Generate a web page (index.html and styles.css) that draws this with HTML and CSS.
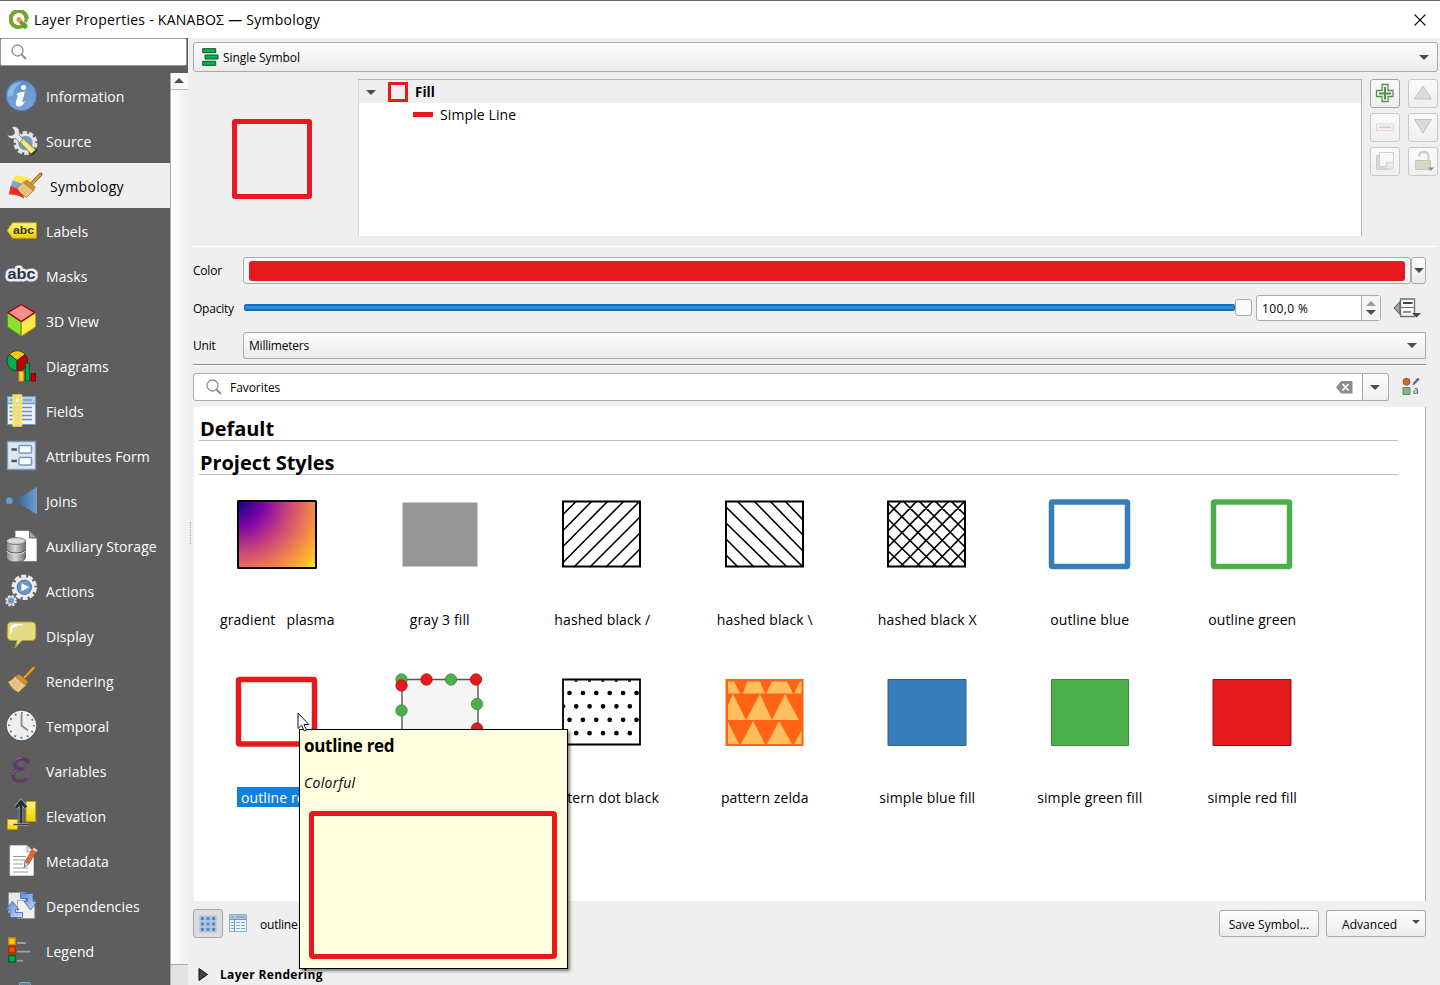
FILE: index.html
```html
<!DOCTYPE html>
<html lang="en">
<head>
<meta charset="utf-8">
<title>Layer Properties - ΚΑΝΑΒΟΣ — Symbology</title>
<link rel="stylesheet" href="styles.css">
</head>
<body>
<svg class="defs" width="0" height="0">
  <defs>
    <linearGradient id="gBlue" x1="0" y1="0" x2="0" y2="1"><stop offset="0" stop-color="#5f93cf"/><stop offset="1" stop-color="#79a5d8"/></linearGradient>
    <linearGradient id="gYel" x1="0" y1="0" x2="0" y2="1"><stop offset="0" stop-color="#fff27a"/><stop offset="1" stop-color="#f0d000"/></linearGradient>
    <linearGradient id="gJoin"><stop offset="0" stop-color="#2f5f96"/><stop offset="1" stop-color="#729fcf"/></linearGradient>
    <linearGradient id="gCyl"><stop offset="0" stop-color="#8a8a8a"/><stop offset=".45" stop-color="#d8d8d8"/><stop offset="1" stop-color="#6e6e6e"/></linearGradient>
    <linearGradient id="gArr" x1="0" y1="0" x2="1" y2="1"><stop offset="0" stop-color="#5a8ede"/><stop offset="1" stop-color="#c8dcf8"/></linearGradient>
    <radialGradient id="gPlasma" gradientUnits="userSpaceOnUse" cx="3" cy="3" r="102">
      <stop offset="0" stop-color="#0d0887"/><stop offset=".25" stop-color="#7e03a8"/><stop offset=".5" stop-color="#cb4679"/><stop offset=".74" stop-color="#f38748"/><stop offset=".9" stop-color="#fdb92c"/><stop offset="1" stop-color="#f4f020"/>
    </radialGradient>
    <g id="brush">
      <path d="M34 9.500 24 20" stroke="#8a5510" stroke-width="3.800" stroke-linecap="round"/>
      <path d="M33.700 9.800 24 20" stroke="#e0a040" stroke-width="2.300" stroke-linecap="round"/>
      <path d="M15.500 18 26.500 27 18.500 34.500 Q11 31 8 23.700Q12 22.500 15.500 18Z" fill="#edc98c" stroke="#a06a20" stroke-width=".8"/>
      <path d="M11.500 24 19 32M14 22.500 21.500 30M16 20.500 24 28M12 28.500 17 21M15.500 31 20.500 23.500" stroke="#c89a5c" stroke-width=".5"/>
      <path d="M19 16 28 23.500 26 27.300 15.500 18.500Z" fill="#d1923a" stroke="#9a641c" stroke-width=".7"/>
    </g>
    <g id="lens" fill="none" stroke="#8f8f8f"><circle cx="6.500" cy="6.500" r="5.500" stroke-width="1.300"/><path d="m10.500 10.500 4.500 4.500" stroke-width="2"/></g>
  </defs>
</svg>
<div class="window">
  <header class="titlebar">
    <svg class="logo" width="20" height="20" viewBox="0 0 20 20" fill="none"><path d="M15.500 14.500A8 8 0 1 1 17.700 9" stroke="#75a52e" stroke-width="4.200"/><path d="M10.500 10.500 17 17" stroke="#75a52e" stroke-width="5"/><path d="m11 9.500 6.200 7" stroke="#a6cc5a" stroke-width="1.500"/><path d="M16.300 12A7.700 7.700 0 0 0 17.300 8" stroke="#75a52e" stroke-width="3.500"/><circle cx="9.700" cy="9.500" r="5.700" fill="#fff"/><path d="m11 11 6.500 7" stroke="#6b9a2a" stroke-width="3.500"/><circle cx="10" cy="9.500" r="2.500" fill="#f1903e"/></svg>
    <h1 class="title">Layer Properties - ΚΑΝΑΒΟΣ — Symbology</h1>
    <svg class="close" width="12" height="12" viewBox="0 0 12 12"><path d="m.5.5 11 11m0-11-11 11" stroke="#111" stroke-width="1.100"/></svg>
  </header>
  <div class="body">
    <aside class="sidebar">
      <div class="side-search"><svg width="16" height="16" viewBox="0 0 16 16"><use href="#lens"/></svg></div>
      <div class="side-wrap">
        <nav class="side-list">
          <a class="item"><svg class="ico" viewBox="0 0 44 45"><circle cx="21.300" cy="22.500" r="15.200" fill="url(#gBlue)" stroke="#4679b6" stroke-width=".8"/><path d="M8 24Q7 10 22 9Q14 13 13 22Z" fill="#a4c3e8" opacity=".7"/><circle cx="23.500" cy="14.500" r="2.500" fill="#fff"/><path d="M17 20.500q3-2 8-1.800l-3 10.500q1.500.3 3-1.200-1.700 5.500-6.500 5.500-3.500-.6-2.500-4.500l2-7q-1-.5-1.700.6z" fill="#fff"/></svg><span>Information</span></a>
          <a class="item"><svg class="ico" viewBox="0 0 44 45"><circle cx="25.500" cy="25" r="10.500" fill="none" stroke="#dedede" stroke-width="3" stroke-dasharray="4.500 2.100"/><circle cx="25.500" cy="25" r="8.500" fill="#6f9ccc" stroke="#e4e4e4" stroke-width="2.500"/><path d="M7 16.500Q12 19 14.500 15.500L14 12Q11 9.500 12.500 8.500Q19 8 19.500 14L19 17 24 22 20 25 16 20.500Q9 22 7 16.500Z" fill="#e8e8e8" stroke="#555" stroke-width=".6"/><path d="M23.500 20.500 36.500 32.500 32 37 20 24.500Z" fill="#f1dc6c" stroke="#7d6a1c" stroke-width=".8"/><path d="m23 24 9.500 9.500" stroke="#fff5ae" stroke-width="1.500"/><path d="m31 37 6-5" stroke="#3c3415" stroke-width="1.800"/></svg><span>Source</span></a>
          <a class="item active"><svg class="ico" viewBox="0 0 44 45"><path d="M15 12 31 15.500 28 26 12 20Z" fill="#ffe64a"/><path d="m12.500 17.500 14 4.500-3 7-13-5z" fill="#7fa6d6"/><path d="M10.500 23 23 28 24 35.500Q17 31 9 31.500Z" fill="#ee2c24"/><use href="#brush" transform="translate(9.500 2.500) scale(.92)"/></svg><span>Symbology</span></a>
          <a class="item"><svg class="ico" viewBox="0 0 44 45"><path d="M7 22.500 12.500 14.700H36.500V30.300H12.500Z" fill="url(#gYel)" stroke="#b89612" stroke-width="1"/><text class="abc" x="13" y="25.700" font-size="11.500" textLength="21" lengthAdjust="spacingAndGlyphs">abc</text></svg><span>Labels</span></a>
          <a class="item"><svg class="ico" viewBox="0 0 44 45"><text class="abc halo" x="7.500" y="26" font-size="15" textLength="28" lengthAdjust="spacingAndGlyphs">abc</text></svg><span>Masks</span></a>
          <a class="item"><svg class="ico" viewBox="0 0 44 45"><path d="M7.500 15 21 24V38L7.500 29Z" fill="#87e12e" stroke="#4b9a0c"/><path d="M35.500 15 21.500 24V38L35.500 29Z" fill="#ffe94e" stroke="#b89b00"/><path d="M21.300 6.500 34.700 14.500 21.300 23.500 8 14.500Z" fill="#f58e8e" stroke="#a40000" stroke-width="1.300"/></svg><span>3D View</span></a>
          <a class="item"><svg class="ico" viewBox="0 0 44 45"><g stroke="#222" stroke-width=".7"><path d="M17 17.500 9.500 11.500A10 10 0 0 1 25 11.500Z" fill="#fcc800"/><path d="M17 17.500 9.500 11.500A9.600 9.600 0 0 0 17 27.500Z" fill="#00b050"/><path d="M17 17.500 25 11.500A9.600 9.600 0 0 1 17 27.500Z" fill="#c00000"/></g><path d="M19 28.500h4.500v9.500H19z" fill="#ffd42a" stroke="#e09000"/><path d="M25.500 20.500h4v17.500h-4z" fill="#00a550" stroke="#05602c"/><path d="M31 30.500h4.500V38H31z" fill="#c00000" stroke="#700"/></svg><span>Diagrams</span></a>
          <a class="item"><svg class="ico" viewBox="0 0 44 45"><path d="M7.500 8.500h28v28h-28z" fill="#f0f0f0" stroke="#6f9ac4"/><path d="M8 9h27v6.500H8z" fill="#b4d0ee"/><path d="M8 15.500h27M10 12h5M23 12h9" stroke="#6f9ac4" stroke-width="1.300"/><path d="M9.500 19.500H32M9.500 23.500H32M9.500 27.500H32M9.500 31.500H32" stroke="#6690bf" stroke-width="1.300"/><path d="M13 7h8.500v31H13z" fill="#eee287" stroke="#f9f051" stroke-width="1.300" opacity=".95"/><path d="M16 11h2.500v2.500H16z" fill="#fff"/></svg><span>Fields</span></a>
          <a class="item"><svg class="ico" viewBox="0 0 44 45"><path d="M7.500 8.500h28v28h-28z" fill="#e4e5e6" stroke="#6f9ccd" stroke-width="1.300"/><path d="M11.500 16.500H17M11.500 28H17" stroke="#41597b" stroke-width="2.500"/><rect x="19" y="12.500" width="12.500" height="7.500" rx="1" fill="#fff" stroke="#7199c4" stroke-width="1.500"/><rect x="19" y="24.500" width="12.500" height="7.500" rx="1" fill="#fff" stroke="#7199c4" stroke-width="1.500"/></svg><span>Attributes Form</span></a>
          <a class="item"><svg class="ico" viewBox="0 0 44 45"><circle cx="9.300" cy="22.700" r="3.500" fill="#6c9bd0" stroke="#4677ac" stroke-width=".6"/><path d="M15 22.700 37 8.700V36.500Z" fill="url(#gJoin)"/></svg><span>Joins</span></a>
          <a class="item"><svg class="ico" viewBox="0 0 44 45"><path d="M15.500 8H29.500L36.500 15V38H15.500Z" fill="#fff" stroke="#ddd" stroke-width=".5"/><path d="M29.500 8V15H36.500Z" fill="#aaa" stroke="#555" stroke-width=".8"/><path d="M6.500 18V35Q8 39 16 39T25.500 35V18Z" fill="url(#gCyl)" stroke="#555" stroke-width=".7"/><ellipse cx="16" cy="18" rx="9.500" ry="3.400" fill="#d9d9d9" stroke="#606060" stroke-width=".8"/><path d="M6.500 26.500Q9 30 16 30T25.500 26.500" fill="none" stroke="#505050"/><path d="M6.500 27.700Q9 31.200 16 31.200T25.500 27.700" fill="none" stroke="#ececec" stroke-width=".8"/></svg><span>Auxiliary Storage</span></a>
          <a class="item"><svg class="ico" viewBox="0 0 44 45"><circle cx="24.300" cy="19.300" r="11" fill="none" stroke="#e9e9e9" stroke-width="3.500" stroke-dasharray="5 1.910"/><circle cx="24.300" cy="19.300" r="8.700" fill="#6b98cc" stroke="#ececec" stroke-width="3"/><circle cx="24.300" cy="19.300" r="7.200" fill="#6b98cc" stroke="#355e94" stroke-width=".7"/><path d="M21.500 15.300 29 19.300 21.500 23.300Z" fill="#fff"/><circle cx="11" cy="32.700" r="4.900" fill="none" stroke="#e0e0e0" stroke-width="1.800" stroke-dasharray="2.500 1.350"/><circle cx="11" cy="32.700" r="3.700" fill="#6b98cc" stroke="#ddd" stroke-width="1.300"/></svg><span>Actions</span></a>
          <a class="item"><svg class="ico" viewBox="0 0 44 45"><path d="M11.500 9H31.500Q35.800 9 35.800 13.500V23Q35.800 27.500 31.500 27.500H22L15 34.700 17 27.500H12Q7.300 27.500 7.300 23V13.500Q7.300 9 11.500 9Z" fill="#e5db83" stroke="#b39b28"/><path d="M10.500 21V16Q10.500 11.500 16 11.500H23Q14 12.500 12.500 15Z" fill="#fff" stroke="#fff" stroke-width=".8"/></svg><span>Display</span></a>
          <a class="item"><svg class="ico" viewBox="0 0 44 45"><use href="#brush"/></svg><span>Rendering</span></a>
          <a class="item"><svg class="ico" viewBox="0 0 44 45"><circle cx="21.500" cy="22.500" r="15.200" fill="#4e4e4e"/><circle cx="21.500" cy="22.500" r="14.400" fill="#eeeeec" stroke="#fff" stroke-width=".7"/><circle cx="21.500" cy="22.500" r="12.300" fill="none" stroke="#4d79ae" stroke-width="2" stroke-dasharray="1.800 4.640" stroke-dashoffset=".9"/><path d="M21.500 11.500V22.500L28 27.500" fill="none" stroke="#888" stroke-width="1.800"/></svg><span>Temporal</span></a>
          <a class="item"><svg class="ico" viewBox="0 0 44 45"><path d="M28 13.500Q25 10 20 11.200Q14.500 12.500 14.800 16.500Q15.500 21 24.500 21Q13.500 21 13 27Q13 33.300 20.500 33Q26 33 29 29" fill="none" stroke="#5f3768" stroke-width="3.200"/><circle cx="27.500" cy="13.500" r="2.200" fill="#5f3768"/><circle cx="28" cy="29" r="2" fill="#76507e"/><path d="M15 12.500Q18 10 22 10M12.500 27Q13 23.500 17 22" stroke="#9a7ba5" fill="none" stroke-width=".8"/></svg><span>Variables</span></a>
          <a class="item"><svg class="ico" viewBox="0 0 44 45"><path d="M26 8.500h9.700v20H26z" fill="url(#gYel)" stroke="#b99f00"/><path d="M7.500 26.500h10v10h-10z" fill="url(#gYel)" stroke="#b99f00"/><path d="M13.500 31.500H29" stroke="#aaa" stroke-width="2.200"/><path d="M13.500 31.500H29" stroke="#333" stroke-width=".9"/><path d="M21 30V11M16 14.500 21 8.500 26 14.500" fill="none" stroke="#a9b0b0" stroke-width="4.300"/><path d="M21 30V11M16 14.500 21 8.500 26 14.500" fill="none" stroke="#263033" stroke-width="2.800"/></svg><span>Elevation</span></a>
          <a class="item"><svg class="ico" viewBox="0 0 44 45"><path d="M10 7.500H27L33.500 14V37.500H10Z" fill="#fff" stroke="#ddd" stroke-width=".6"/><path d="M27 7.500V14H33.500" fill="#ddd" stroke="#888" stroke-width=".7"/><path d="M13 18.500H26M13 22H25M13 26H23M13 30H28M13 34H28" stroke="#9a9a9a" stroke-width="1.200"/><path d="M33 10.500 37 13 28.500 26 24.500 29 25 23.500Z" fill="#de6a32" stroke="#9d4216" stroke-width=".7"/><path d="m33 10.500 4 2.500" stroke="#f0d0c0" stroke-width="2.200"/><path d="M25 23.500 28.500 26 24.300 29.500Z" fill="#ddd" stroke="#555" stroke-width=".6"/></svg><span>Metadata</span></a>
          <a class="item"><svg class="ico" viewBox="0 0 44 45"><path d="M8.500 9.500H25.500V30H8.500Z" fill="#e7e7e5" stroke="#888" stroke-width=".6"/><path d="M17.500 17.500H34.700V35.500H17.500Z" fill="#f1f1ef" stroke="#888" stroke-width=".6"/><path d="M20.500 10.500H33V18.500H37L30.500 27 24 18.500H27.500V15.500H20.500Z" fill="url(#gArr)" stroke="#3766b5" stroke-width=".8"/><path d="M22.500 34.500H10V26.500H6L12.500 18.500 19 26.500H15.500V29.500H22.500Z" fill="url(#gArr)" stroke="#3766b5" stroke-width=".8"/></svg><span>Dependencies</span></a>
          <a class="item"><svg class="ico" viewBox="0 0 44 45"><path d="M8.700 10h6.500v6.500H8.700z" fill="#ffd500" stroke="#d78300" stroke-width="1.400"/><path d="M8.700 18.500h6.500V25H8.700z" fill="#ff4b00" stroke="#b52a00" stroke-width="1.400"/><path d="M8.700 27.500h6.500V34H8.700z" fill="#00b050" stroke="#00602c" stroke-width="1.400"/><path d="M17 15h9M17 23.700h13.500M17 32.700h6" stroke="#a0a0a0" stroke-width="1.800"/></svg><span>Legend</span></a>
          <a class="item"><svg class="ico" viewBox="0 0 44 45"><rect x="19.500" y="9.500" width="11" height="20" rx="1" fill="#5f7f9f" stroke="#8aa9c8"/></svg><span></span></a>
        </nav>
        <div class="scrollbar">
          <div class="sb-up"><i class="tri up"></i></div>
          <div class="sb-thumb"></div>
          <div class="sb-groove"></div>
        </div>
      </div>
    </aside>
    <main class="main">
      <div class="combo renderer">
        <svg width="17" height="18" viewBox="0 0 17 18" fill="#05b050" stroke="#07572b"><path d="M.7.700h13v4h-13zM3 7h13v4H3zM.7 13.300h13v4h-13z"/></svg>
        <span class="sm">Single Symbol</span><i class="tri down"></i>
      </div>
      <section class="symbol">
        <div class="preview"><div class="preview-box"></div></div>
        <div class="tree">
          <div class="tree-row head"><i class="tri down"></i><i class="fill-ico"></i><span>Fill</span></div>
          <div class="tree-row child"><i class="line-ico"></i><span>Simple Line</span></div>
        </div>
        <div class="tools">
          <button class="tool on"><svg viewBox="0 0 30 29"><path d="M12 5.500h6v6h5v6h-5v5h-6v-5H6.500v-6H12z" fill="#f2f8f0" stroke="#569050" stroke-width="1.300"/><path d="M15 8v12.500M9 14.500h12" stroke="#569050" stroke-width="2.200"/></svg></button>
          <button class="tool"><svg viewBox="0 0 30 29"><path d="M15 7 23.500 20H6.500Z" fill="#d9dcdf" stroke="#bcc1c6"/></svg></button>
          <button class="tool"><svg viewBox="0 0 30 29"><path d="M6.500 11h17v6.500h-17z" fill="#f7f2f2" stroke="#e3d5d5"/><path d="M9 14.300h12" stroke="#ddcfcf" stroke-width="1.800"/></svg></button>
          <button class="tool"><svg viewBox="0 0 30 29"><path d="M15 20 23.500 6.500H6.500Z" fill="#d9dcdf" stroke="#bcc1c6"/></svg></button>
          <button class="tool"><svg viewBox="0 0 30 29"><path d="M6.500 8.500h12v14h-12z" fill="#d9dadb" stroke="#c8cacc"/><path d="M9.500 5.500h14v14h-14z" fill="#f7f7f7" stroke="#cbcdcf"/><path d="M16.500 15.500h7v4q0 3-3.500 3t-3.500-3z" fill="#eeebdf" stroke="#d4d0c3"/></svg></button>
          <button class="tool"><svg viewBox="0 0 30 29"><path d="M11 9.500q0-4.500 4.700-4.500T20.500 9.500V14" fill="none" stroke="#cfcfcf" stroke-width="2.300"/><path d="M7.500 13.500h15v9h-15z" fill="#d9d6c8" stroke="#c9c5b2"/><path d="M20 20.500h6l-3 3.500z" fill="#8f8f8f"/></svg></button>
        </div>
      </section>
      <hr class="rule light">
      <div class="row color-row"><label class="sm lab">Color</label><div class="color-btn"><div class="color-fill"></div></div><div class="color-drop"><i class="tri down"></i></div></div>
      <div class="row opacity-row"><label class="sm lab">Opacity</label>
        <div class="slider"><div class="track"></div><div class="knob"></div></div>
        <div class="spin"><span class="sm">100,0 %</span><div class="spin-btns"><i class="tri up dim"></i><i class="tri down"></i></div></div>
        <svg class="dd" width="28" height="22" viewBox="0 0 28 22"><path d="M1 11 7 4.500V17.500Z" fill="#a0a0a4" stroke="#555"/><path d="M7.500 2h14v17.500h-14z" fill="#f7f9f4" stroke="#6b7267" stroke-width="1.300"/><path d="M7.500 10.500h14" stroke="#6b7267"/><path d="M10 6h9.500" stroke="#444" stroke-width="2"/><path d="M10 15h8" stroke="#555" stroke-width="1.300"/><path d="M19 16h9l-4.500 4.500z" fill="#444"/></svg>
      </div>
      <div class="row unit-row"><label class="sm lab">Unit</label><div class="combo unit"><span class="sm">Millimeters</span><i class="tri down"></i></div></div>
      <hr class="rule dark">
      <div class="row filter-row">
        <div class="filter"><svg width="16" height="16" viewBox="0 0 16 16"><use href="#lens"/></svg><span class="sm">Favorites</span><svg class="clear" width="17" height="13" viewBox="0 0 17 13"><path d="M5 0H16.500V12.500H5L0 6.200Z" fill="#8d8d8d"/><path d="m6.500 3 6 6.500m0-6.500-6 6.500" stroke="#fff" stroke-width="1.600"/></svg></div>
        <div class="filter-drop"><i class="tri down"></i></div>
        <svg class="style-ico" width="22" height="22" viewBox="0 0 22 22"><circle cx="4.500" cy="5.700" r="3.600" fill="#d0662d" stroke="#a64a1c" stroke-width=".7"/><path d="M10.500 9 11.500 6.500 15.500 2 17.500 2.500 17 4 12.500 8.500Z" fill="#456b94"/><path d="M1 11.500h7v7H1z" fill="#8ab38a" stroke="#5d8f60"/><text x="11" y="18" font-size="10" class="tiny">a</text></svg>
      </div>
      <section class="styles">
        <h2 class="group">Default</h2>
        <h2 class="group">Project Styles</h2>
        <div class="grid">
          <figure class="cell"><svg viewBox="0 0 84 72"><rect x="3" y="3" width="78" height="67" rx=".5" fill="url(#gPlasma)" stroke="#000" stroke-width="2"/></svg><figcaption class="wide">gradient&nbsp;&nbsp; plasma</figcaption></figure>
          <figure class="cell"><svg viewBox="0 0 84 72"><path d="M4.500 4.500h75v64h-75z" fill="#969696"/></svg><figcaption>gray 3 fill</figcaption></figure>
          <figure class="cell"><svg viewBox="0 0 84 72"><path d="M2.500 17 16.500 3M2.500 33 32 3M2.500 49 48 3M2.500 65 64 3M14 69 80 3M30 69 80 19M46 69 80 35M62 69 80 51" stroke="#000" stroke-width="1.600"/><path d="M3 3.500h77v65H3z" fill="none" stroke="#000" stroke-width="2"/></svg><figcaption>hashed black /</figcaption></figure>
          <figure class="cell"><svg viewBox="0 0 84 72"><path d="M80 22 62 3M80 37 47 3M80 53 31 3M80 69 14 3M64 69 3 9M48 69 3 25M31 69 3 41M15 69 3 57" stroke="#000" stroke-width="1.600"/><path d="M3 3.500h77v65H3z" fill="none" stroke="#000" stroke-width="2"/></svg><figcaption>hashed black \</figcaption></figure>
          <figure class="cell"><svg viewBox="0 0 84 72"><path d="M3 17 16.500 3M3 33 32 3M3 49 48 3M3 65 64 3M15 69 80 3M31 69 80 19M47 69 80 35M63 69 80 51M80 17 66 3M80 33 50 3M80 49 34 3M80 65 18 3M68 69 3 5M52 69 3 21M36 69 3 37M20 69 3 53" stroke="#000" stroke-width="1.700"/><path d="M3 3.500h77v65H3z" fill="none" stroke="#000" stroke-width="2"/></svg><figcaption>hashed black X</figcaption></figure>
          <figure class="cell"><svg viewBox="0 0 84 72"><rect x="3.500" y="4" width="76" height="64.500" rx="1" fill="none" stroke="#377eb8" stroke-width="5.500"/></svg><figcaption>outline blue</figcaption></figure>
          <figure class="cell"><svg viewBox="0 0 84 72"><rect x="3.500" y="4" width="76" height="64.500" rx="1" fill="none" stroke="#4daf4a" stroke-width="5.500"/></svg><figcaption>outline green</figcaption></figure>
          <figure class="cell"><svg viewBox="0 0 84 72"><rect x="3.500" y="3.500" width="76" height="64.500" rx="1" fill="none" stroke="#e41a1c" stroke-width="5.500"/></svg><figcaption class="sel">outline red</figcaption></figure>
          <figure class="cell"><svg viewBox="0 0 84 72"><path d="M4 3.500h76v64H4z" fill="#f5f5f5" stroke="#555" stroke-width="1.400"/><g stroke-width=".8"><g fill="#4daf4a" stroke="#3b8a39"><circle cx="3.500" cy="3.500" r="5.700"/><circle cx="53" cy="3.500" r="5.700"/><circle cx="3.500" cy="34.500" r="5.700"/><circle cx="79" cy="28" r="5.700"/></g><g fill="#e41a1c" stroke="#a81315"><circle cx="3.500" cy="9.500" r="5.700"/><circle cx="28.500" cy="3.500" r="5.700"/><circle cx="78" cy="3.500" r="5.700"/><circle cx="79" cy="52.500" r="5.700"/></g></g></svg><figcaption></figcaption></figure>
          <figure class="cell"><svg viewBox="0 0 84 72"><path d="M3 3.500h77v65H3z" fill="#fff" stroke="#000" stroke-width="1.800"/><g fill="none" stroke="#000" stroke-width="4.700" stroke-linecap="round" stroke-dasharray="0 13.400"><path d="M9.500 17H80"/><path d="M16.200 30.300H75"/><path d="M9.500 43.800H80"/><path d="M16.200 57.200H75"/></g><path d="M14.500 5h3M28 5h3M41.300 5h3M54.700 5h3M68 5h3M4.500 28.800v3" stroke="#000" stroke-width="1.500"/></svg><figcaption>pattern dot black</figcaption></figure>
          <figure class="cell"><svg viewBox="0 0 84 72"><path d="M3 3.500h77v66H3z" fill="#ff6314"/><path d="M5 5.500h6l6 12H5zM20 17.500 24 5.500H37L42 17.500ZM43 17.500 49 5.500H64L70 17.500ZM71 17.500 77 5.500H79V17.500ZM5 29 10 18 23 44H5ZM23 44 37 18 49 44ZM49 44 62 18 76 44ZM5 46 16 68H5ZM18 68 30 45 42 68ZM44 68 56 45 69 68ZM71 68 79 54V68Z" fill="#ffbe5f"/><path d="M3.500 4h76v65h-76z" fill="none" stroke="#ff6314" stroke-width="2"/></svg><figcaption>pattern zelda</figcaption></figure>
          <figure class="cell"><svg viewBox="0 0 84 72"><path d="M3 3.500h78v66H3z" fill="#377eb8" stroke="#2b628f"/></svg><figcaption>simple blue fill</figcaption></figure>
          <figure class="cell"><svg viewBox="0 0 84 72"><path d="M3.500 3.500h77v66h-77z" fill="#4daf4a" stroke="#3c883a"/></svg><figcaption>simple green fill</figcaption></figure>
          <figure class="cell"><svg viewBox="0 0 84 72"><path d="M3 3.500h78v66H3z" fill="#e41a1c" stroke="#8f1214"/></svg><figcaption>simple red fill</figcaption></figure>
        </div>
      </section>
      <div class="footer">
        <button class="view on"><svg width="18" height="18" viewBox="0 0 18 18"><path d="M.5.500h17v17H.5z" fill="#a9c6e6" stroke="#bcd0e6"/><g fill="#5d88b8"><path d="M2 2h3v3H2zM7.500 2h3v3h-3zM13 2h3v3h-3zM2 7.500h3v3H2zM7.500 7.500h3v3h-3zM13 7.500h3v3h-3zM2 13h3v3H2zM7.500 13h3v3h-3zM13 13h3v3h-3z"/></g></svg></button>
        <svg class="list-ico" width="18" height="18" viewBox="0 0 18 18"><path d="M.5.500h17v17H.5z" fill="#eef3f8" stroke="#8db0d6"/><path d="M1 1h16v4H1z" fill="#a9c6e6"/><path d="M2 3h3M7 3h9M1 5.500h16M5.500 5v12" stroke="#6c98c8"/><path d="M2 8.500h3M7 8.500h4M12 8.500h4M2 11.500h3M7 11.500h4M12 11.500h4M2 14.500h3M7 14.500h4M12 14.500h4" stroke="#7ea5d0"/></svg>
        <span class="sm name">outline red</span>
        <button class="btn">Save Symbol...</button>
        <button class="btn adv">Advanced<i class="tri down small"></i></button>
      </div>
      <div class="rendering"><svg width="11" height="15" viewBox="0 0 11 15"><path d="M1 1.500 9.500 7.500 1 13.500Z" fill="#444" stroke="#111"/></svg><b>Layer Rendering</b></div>
      <div class="grip"></div>
    </main>
  </div>
  <div class="tooltip"><b>outline red</b><i>Colorful</i><div class="tip-box"></div></div>
  <svg class="cursor" width="14" height="20" viewBox="0 0 14 20"><path d="M1 1V16.500L4.500 13.200 7.300 19 9.500 18 7 12.500H11.800Z" fill="#fff" stroke="#112" stroke-width="1"/></svg>
</div>
</body>
</html>
```
FILE: styles.css
```css
* { box-sizing: border-box; }
body { margin: 0; font-family: "Open Sans", "Noto Sans", sans-serif; font-size: 14px; color: #000; overflow: hidden; }
h1, h2, figure, hr { margin: 0; }
button { font: inherit; padding: 0; }
svg { display: block; flex: none; }
.defs { position: absolute; }
.window { position: relative; width: 1440px; height: 985px; background: #efefef; overflow: hidden; display: flex; flex-direction: column; }
.titlebar { flex: none; height: 38px; background: #fff; border-top: 1px solid #666; display: flex; align-items: center; padding: 0 14px 0 9px; }
.title { font-size: 14px; font-weight: 400; margin-left: 5px; flex: 1; white-space: nowrap; letter-spacing: .26px; }
.body { flex: 1; display: flex; min-height: 0; }

.tri { display: block; flex: none; width: 0; height: 0; border: 5px solid transparent; }
.tri.down { border-top-color: #4c4c4c; border-bottom: 0; }
.tri.up { border-bottom-color: #4c4c4c; border-top: 0; }
.tri.dim { border-bottom-color: #999; }
.tri.small { border-width: 4px; border-bottom: 0; }
.sm { font-size: 12px; letter-spacing: -.22px; white-space: nowrap; }

.sidebar { width: 188px; flex: none; background: #5e5e5e; display: flex; flex-direction: column; }
.side-search { height: 28px; width: 187px; background: #fff; border: 1px solid #999; border-radius: 2px; padding: 5px 10px; }
.side-wrap { margin-top: 7px; flex: 1; display: flex; min-height: 0; }
.side-list { width: 170px; overflow: hidden; }
.item { display: flex; align-items: center; height: 45px; color: #fff; white-space: nowrap; letter-spacing: .07px; }
.item span { margin-left: 2px; padding-top: 1px; }
.item.active { background: #efefef; color: #000; letter-spacing: .3px; }
.item.active span { margin-left: 6px; }
.ico { width: 44px; height: 45px; fill: none; }
.abc { font-family: "Liberation Sans", sans-serif; font-weight: 700; fill: #333; letter-spacing: 0; }
.halo { fill: #2e3436; stroke: #e6edfc; stroke-width: 5px; paint-order: stroke; stroke-linejoin: round; }
.tiny { font-family: "Open Sans", sans-serif; fill: #444; }
.scrollbar { width: 18px; display: flex; flex-direction: column; border-left: 1px solid #aaa; }
.sb-up { height: 17px; background: #fafafa; border-bottom: 1px solid #bbb; padding: 5px 0 0 3px; }
.sb-thumb { flex: 1; background: linear-gradient(90deg, #fff, #efefef); }
.sb-groove { height: 21px; background: #e2e2e2; border-top: 1px solid #aaa; }

.main { position: relative; flex: 1; min-width: 0; padding: 4px 0 0 5px; display: flex; flex-direction: column; }
.combo { display: flex; align-items: center; background: linear-gradient(#fdfdfd, #ebebeb); border: 1px solid #aaa; border-radius: 3px; }
.combo .sm { flex: 1; }
.renderer { flex: none; height: 30px; width: 1245px; padding: 0 8px; }
.renderer .sm { margin-left: 4px; letter-spacing: -.05px; }
.symbol { flex: none; display: flex; margin-top: 7px; height: 157px; }
.preview { width: 165px; padding: 40px 0 0 39px; }
.preview-box { width: 80px; height: 80px; border: 5px solid #e8191c; border-radius: 3px; }
.tree { width: 1004px; background: #fff; border-top: 1px solid #b5b5b5; border-right: 1px solid #b5b5b5; border-left: 1px solid #ddd; }
.tree-row { display: flex; align-items: center; height: 23px; }
.tree-row.head { background: #efefef; padding: 1px 0 0 7px; height: 23px; font-weight: 700; font-size: 13.5px; }
.fill-ico { width: 20px; height: 20px; border: 3px solid #e8191c; margin: 0 7px 0 12px; background: #f5eeee; }
.tree-row.child { padding-left: 54px; letter-spacing: .1px; }
.line-ico { width: 20px; height: 5px; background: #e41a1c; margin-right: 7px; }
.tools { display: grid; grid-template-columns: 30px 30px; grid-auto-rows: 29px; gap: 5px 8px; margin-left: 8px; }
.tool { border: 1px solid #c8c8c8; border-radius: 3px; background: linear-gradient(#fbfbfb, #efefef); }
.tool.on { border-color: #a4a4a4; }
.tool svg { width: 30px; height: 29px; margin: -1px; }
.rule { flex: none; border: 0; width: 1244px; height: 1px; }
.rule.light { background: #fff; margin-top: 10px; }
.rule.dark { width: 1233px; height: 2px; background: #8f8f8f; border-bottom: 1px solid #fff; margin-top: 5px; }
.row { flex: none; display: flex; align-items: center; }
.lab { width: 50px; }
.color-row { margin-top: 10px; height: 27px; }
.color-btn { width: 1168px; height: 27px; border: 1px solid #aaa; border-radius: 3px; padding: 3px 5px; background: #f6f6f6; }
.color-fill { height: 20px; background: #e61a1c; border-radius: 3px; }
.color-drop { width: 15px; height: 27px; border: 1px solid #aaa; border-radius: 3px; background: linear-gradient(#fdfdfd, #ebebeb); padding: 10px 0 0 2px; }
.opacity-row { margin-top: 11px; height: 26px; }
.slider { width: 1008px; display: flex; align-items: center; margin: -2px 0 0 1px; }
.track { flex: 1; height: 7px; border: 1px solid #1a6bb3; border-width: 2px 1px; background: #1e90f0; border-radius: 2px; }
.knob { width: 17px; height: 17px; border: 1px solid #aaa; border-radius: 3px; background: #fafafa; }
.spin { width: 125px; height: 26px; margin-left: 4px; border: 1px solid #aaa; border-radius: 3px; background: #fff; display: flex; align-items: stretch; }
.spin .sm { flex: 1; padding: 4px 0 0 5px; letter-spacing: .5px; letter-spacing: .4px; }
.spin-btns { width: 19px; border-left: 1px solid #aaa; background: #f4f4f4; display: flex; flex-direction: column; align-items: center; justify-content: center; gap: 4px; }
.dd { margin-left: 12px; }
.unit-row { margin-top: 11px; height: 27px; }
.unit { width: 1183px; height: 27px; padding: 0 8px 0 5px; border-radius: 3px 0 0 3px; }
.filter-row { margin-top: 7px; height: 28px; }
.filter { width: 1170px; height: 28px; display: flex; align-items: center; background: #fff; border: 1px solid #aaa; border-radius: 3px 0 0 3px; padding: 0 9px 0 12px; }
.filter .sm { margin-left: 8px; flex: 1; letter-spacing: -.05px; }
.filter-drop { width: 26px; height: 28px; border: 1px solid #aaa; border-left: 0; border-radius: 0 3px 3px 0; background: linear-gradient(#fdfdfd, #f0f0f0); padding: 11px 0 0 7px; }
.style-ico { margin-left: 13px; }

.styles { flex: none; margin: 6px 0 0 1px; width: 1232px; height: 494px; background: #fff; border-right: 1px solid #aaa; overflow: hidden; padding-left: 2px; }
.group { width: 1199px; margin-left: 3px; height: 34px; padding: 8px 0 0 1px; font-size: 20px; line-height: 28px; font-weight: 700; letter-spacing: -.05px; border-bottom: 1px solid #c0c0c0; }
.grid { display: grid; grid-template-columns: repeat(7, 162.5px); grid-auto-rows: 178px; }
.cell { display: flex; flex-direction: column; align-items: center; padding-top: 23px; }
.cell svg { width: 84px; height: 72px; overflow: visible; }
.cell figcaption { margin-top: 40px; height: 20px; line-height: 20px; padding: 0 4px; white-space: nowrap; letter-spacing: .1px; }
.cell .sel { background: #0f80de; color: #fff; margin-top: 39px; line-height: 22px; }

.footer { flex: none; display: flex; align-items: center; margin-top: 8px; height: 29px; width: 1233px; }
.view { width: 30px; height: 29px; border: 1px solid #aaa; border-radius: 3px; background: #dcdcdc; display: flex; align-items: center; justify-content: center; }
.list-ico { margin: -1px 0 0 6px; }
.name { margin-left: 13px; padding-top: 2px; flex: 1; }
.btn { width: 100px; height: 27px; border: 1px solid #aaa; border-radius: 3px; background: linear-gradient(#fdfdfd, #ececec); font-size: 12px; letter-spacing: .05px; padding-top: 1px; }
.adv { margin-left: 7px; display: flex; align-items: center; justify-content: space-between; padding: 1px 5px 0 15px; }
.adv .tri { margin-top: -5px; }
.rendering { flex: none; display: flex; align-items: center; margin: 27px 0 0 5px; height: 18px; font-size: 12px; letter-spacing: .33px; }
.rendering b { margin-left: 11px; }
.grip { position: absolute; left: 2px; top: 484px; height: 22px; border-left: 1px dotted #aaa; }

.tooltip { position: absolute; left: 299px; top: 729px; width: 269px; height: 240px; background: #ffffdf; border: 1px solid #000; box-shadow: 2px 2px 3px rgba(0,0,0,.5); padding: 4px; display: flex; flex-direction: column; }
.tooltip b { font-size: 17px; line-height: 24px; letter-spacing: -.3px; }
.tooltip i { margin-top: 15px; line-height: 20px; letter-spacing: .3px; }
.tip-box { margin: 18px 0 0 5px; width: 248px; height: 148px; border: 5px solid #e8191c; border-radius: 4px; }
.cursor { position: absolute; left: 297px; top: 712px; }
```
